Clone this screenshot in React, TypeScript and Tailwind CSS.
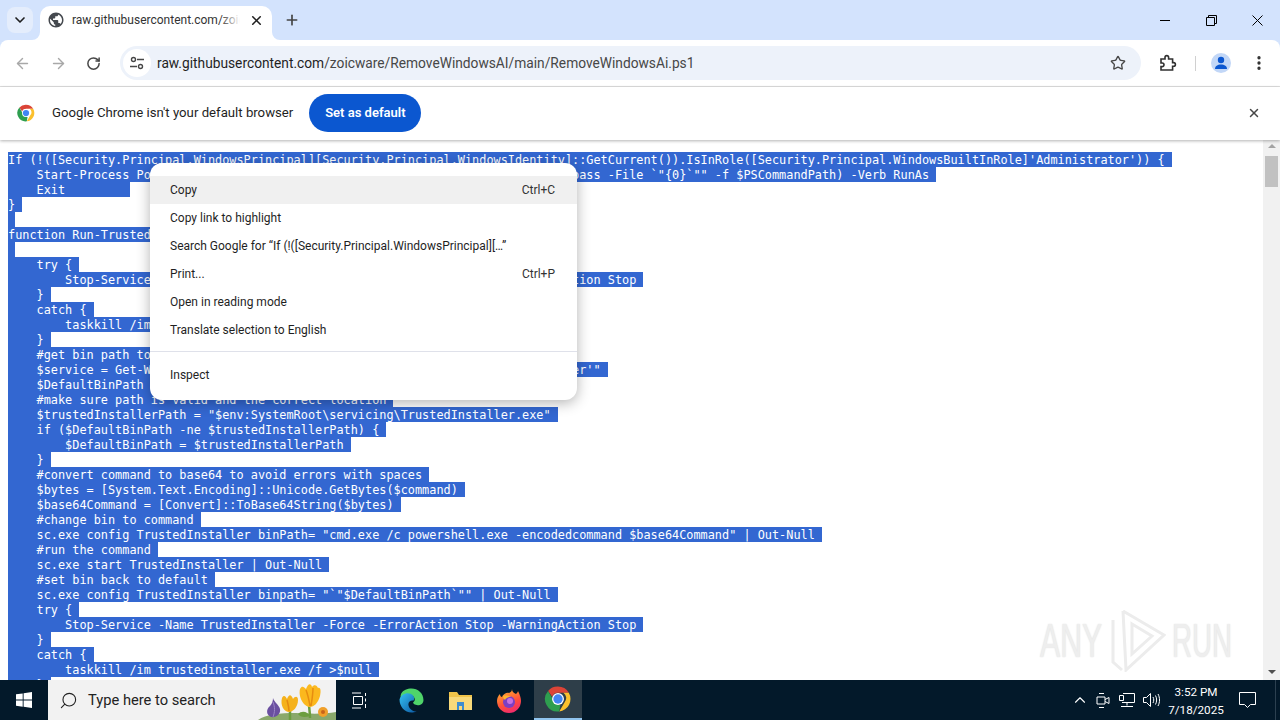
import { ArrowLeft, ArrowRight, ChevronDown, ChevronUp, EllipsisVertical, Plus, RotateCw, Search, Star, X } from 'lucide-react';

type CodeLine = { text: string; cls?: string };

const code: CodeLine[] = [
  { text: "If (!([Security.Principal.WindowsPrincipal][Security.Principal.WindowsIdentity]::GetCurrent()).IsInRole([Security.Principal.WindowsBuiltInRole]'Administrator')) {" },
  { text: '    Start-Process PowerShell.exe -ArgumentList ("-NoProfile -ExecutionPolicy Bypass -File `"{0}`"" -f $PSCommandPath) -Verb RunAs' },
  { text: '    Exit', cls: 'w-[122px]' },
  { text: '}' },
  { text: '' },
  { text: 'function Run-Trusted([String]$command) {' },
  { text: '' },
  { text: '    try {' },
  { text: '        Stop-Service -Name TrustedInstaller -Force -ErrorAction Stop -WarningAction Stop' },
  { text: '    }' },
  { text: '    catch {' },
  { text: '        taskkill /im trustedinstaller.exe /f >$null' },
  { text: '    }' },
  { text: '    #get bin path to revert later' },
  { text: `    $service = Get-WmiObject -Class Win32_Service -Filter "Name='TrustedInstaller'"` },
  { text: '    $DefaultBinPath = $service.PathName' },
  { text: '    #make sure path is valid and the correct location' },
  { text: '    $trustedInstallerPath = "$env:SystemRoot\\servicing\\TrustedInstaller.exe"' },
  { text: '    if ($DefaultBinPath -ne $trustedInstallerPath) {' },
  { text: '        $DefaultBinPath = $trustedInstallerPath' },
  { text: '    }' },
  { text: '    #convert command to base64 to avoid errors with spaces' },
  { text: '    $bytes = [System.Text.Encoding]::Unicode.GetBytes($command)' },
  { text: '    $base64Command = [Convert]::ToBase64String($bytes)' },
  { text: '    #change bin to command' },
  { text: '    sc.exe config TrustedInstaller binPath= "cmd.exe /c powershell.exe -encodedcommand $base64Command" | Out-Null' },
  { text: '    #run the command' },
  { text: '    sc.exe start TrustedInstaller | Out-Null' },
  { text: '    #set bin back to default' },
  { text: '    sc.exe config TrustedInstaller binpath= "`"$DefaultBinPath`"" | Out-Null' },
  { text: '    try {' },
  { text: '        Stop-Service -Name TrustedInstaller -Force -ErrorAction Stop -WarningAction Stop' },
  { text: '    }' },
  { text: '    catch {' },
  { text: '        taskkill /im trustedinstaller.exe /f >$null' },
  { text: '    }' },
];

const menu = [
  { label: 'Copy', keys: 'Ctrl+C', active: true },
  { label: 'Copy link to highlight' },
  { label: 'Search Google for “If (!([Security.Principal.WindowsPrincipal][…”' },
  { label: 'Print...', keys: 'Ctrl+P' },
  { label: 'Open in reading mode' },
  { label: 'Translate selection to English' },
];

function ChromeLogo({ className }: { className: string }) {
  return (
    <svg className={className} viewBox="0 0 48 48">
      <path d="M24 4a20 20 0 0 1 17.3 10H24a10 10 0 0 0-9.3 6.3L8.1 11A20 20 0 0 1 24 4z" fill="#db4437" />
      <path d="M41.3 14A20 20 0 0 1 26 43.9L34.6 29A10 10 0 0 0 32.6 14z" fill="#fbc02d" />
      <path d="M26 43.9A20 20 0 0 1 8.1 11l8.6 15a10 10 0 0 0 11 7.3z" fill="#2e9e4f" />
      <circle cx="24" cy="24" r="9.5" fill="#fff" />
      <circle cx="24" cy="24" r="7.5" fill="#4285f4" />
    </svg>
  );
}

function Flowers() {
  return (
    <svg className="w-[84px] h-10 shrink-0" viewBox="0 0 84 40">
      <path d="M6 40C14 34 28 33 44 33C60 34 74 34 84 32V40Z" fill="#8aa86b" />
      <g transform="translate(6 7)">
        <path d="M13 30C8 28 8 22 12 19C14 17 15 14 15 11C16 15 21 18 22 22C23 27 18 31 13 30Z" fill="#6a4fa0" />
        <path d="M15 15C17 20 17 25 15 30" stroke="#9c86c8" strokeWidth="1" fill="none" />
      </g>
      <path d="M38 40C38 34 38 30 38 30M58 38C58 32 57 28 57 24" stroke="#6c9e3f" strokeWidth="2.5" fill="none" />
      <g transform="translate(5 6)">
        <path d="M25 12C27 8 29 11 30 13C32 8 34 8 36 13C38 10 41 10 41 14C41 21 36 26 32 26C27 26 23 19 25 12Z" fill="#f5b21c" />
        <path d="M30 14C31 18 32 21 32 25" stroke="#e48a12" strokeWidth="1.5" fill="none" />
      </g>
      <g transform="translate(7 3)">
        <path d="M41 6C43 2 45 4 47 6C49 0 52 0 53 4C55 1 58 2 59 5C62 4 62 9 61 13C59 20 55 24 51 24C45 24 39 14 41 6Z" fill="#fbb81e" />
        <path d="M47 7C49 12 50 17 51 23M54 5C54 11 53 17 52 23" stroke="#e78d10" strokeWidth="1.5" fill="none" />
      </g>
      <path d="M46 34C50 30 56 32 58 36C52 38 48 37 46 34Z" fill="#6c9e3f" />
      <circle cx="71" cy="32" r="5" fill="#f0a02a" />
      <circle cx="71" cy="32" r="2" fill="#c8641a" />
    </svg>
  );
}

function Watermark() {
  return (
    <div className="absolute left-[1040px] bottom-[8px] h-[62px] flex items-center font-['Liberation_Sans',sans-serif] text-[#eeeeee] pointer-events-none [text-shadow:0_0_2px_#dddddd]">
      <span className="w-[62px] text-[48px] leading-none origin-left scale-x-[0.63]">ANY</span>
      <svg className="ml-[8px] w-[56px] h-[62px] shrink-0" viewBox="0 0 56 62" fill="none" stroke="#ececec" strokeWidth="3">
        <path d="M13 1L54 25L16 60L13 1M22 14L42 26L22 44ZM3 10V52L12 60" />
      </svg>
      <span className="ml-[6px] w-[60px] text-[48px] leading-none origin-left scale-x-[0.577]">RUN</span>
    </div>
  );
}

export default function App() {
  return (
    <div className="w-[1280px] h-[720px] overflow-hidden flex flex-col bg-[#d3e3fd] font-['Roboto',sans-serif]">
      {/* tab strip */}
      <div className="h-10 flex shrink-0 items-end text-[#1f1f1f]">
        <div className="ml-[7px] mb-[7px] w-[26px] h-[26px] rounded-lg bg-[#e4edfc] flex items-center justify-center">
          <ChevronDown className="w-4 h-4" strokeWidth={2.5} />
        </div>
        <div className="relative ml-[7px] w-[232px] h-[34px] bg-white rounded-t-[10px] flex items-center pl-[8px] pr-2 pb-[6px]">
          <svg className="absolute -left-2 bottom-0 w-2 h-2" viewBox="0 0 8 8"><path d="M8 0V8H0A8 8 0 0 0 8 0Z" fill="#fff" /></svg>
          <svg className="absolute -right-2 bottom-0 w-2 h-2" viewBox="0 0 8 8"><path d="M0 0V8H8A8 8 0 0 1 0 0Z" fill="#fff" /></svg>
          <svg className="w-[18px] h-[18px] shrink-0 ml-[-1px]" viewBox="0 0 24 24" fill="#45494f">
            <path d="M12 2C6.48 2 2 6.48 2 12s4.48 10 10 10 10-4.48 10-10S17.52 2 12 2zm-1 17.93c-3.95-.49-7-3.85-7-7.93 0-.62.08-1.21.21-1.79L9 15v1c0 1.1.9 2 2 2v1.93zm6.9-2.54c-.26-.81-1-1.39-1.9-1.39h-1v-3c0-.55-.45-1-1-1H8v-2h2c.55 0 1-.45 1-1V7h2c1.1 0 2-.9 2-2v-.41c2.93 1.19 5 4.06 5 7.41 0 2.08-.8 3.97-2.1 5.39z" />
          </svg>
          <div className="relative ml-[7px] w-[168px] overflow-hidden whitespace-nowrap text-[12px] text-[#333]">
            raw.githubusercontent.com/zoicware/RemoveWindowsAI
            <div className="absolute right-0 top-0 bottom-0 w-5 bg-gradient-to-r from-transparent to-white" />
          </div>
          <X className="w-[15px] h-[15px] ml-[9px] shrink-0" strokeWidth={2.5} />
        </div>
        <div className="ml-[12px] mb-[12px] w-4 h-4 flex items-center justify-center">
          <Plus className="w-4 h-4 text-[#444]" strokeWidth={2.5} />
        </div>
        <div className="ml-auto h-10 flex items-center text-[#111]">
          <div className="w-[46px] flex justify-center"><div className="w-[10px] h-px bg-black" /></div>
          <div className="w-[46px] flex justify-center">
            <svg className="w-[11px] h-[11px]" viewBox="0 0 11 11" fill="none" stroke="#000"><path d="M.5 2.5h8v8h-8zM2.5 2.5v-2h8v8h-2" /></svg>
          </div>
          <div className="w-[46px] flex justify-center">
            <svg className="w-[11px] h-[11px]" viewBox="0 0 11 11" fill="none" stroke="#000"><path d="M.5.5l10 10M10.5.5l-10 10" /></svg>
          </div>
        </div>
      </div>

      {/* toolbar */}
      <div className="h-[47px] shrink-0 bg-white rounded-t-[8px] border-b border-[#e0e0e0] flex items-center text-[#474747]">
        <ArrowLeft className="ml-[14px] w-[17px] h-[17px] text-[#a8a8a8]" strokeWidth={2} />
        <ArrowRight className="ml-[19px] w-[17px] h-[17px] text-[#a8a8a8]" strokeWidth={2} />
        <RotateCw className="ml-[19px] w-[15px] h-[15px] text-[#474747]" strokeWidth={2.4} />
        <div className="ml-[19px] w-[1021px] h-[34px] rounded-full bg-[#edf2fa] flex items-center pl-[3px]">
          <div className="w-[28px] h-[28px] rounded-full bg-white flex items-center justify-center shrink-0">
            <svg className="w-4 h-4" viewBox="0 0 16 16" fill="none" stroke="#474747" strokeWidth="1.4">
              <circle cx="4.5" cy="4.5" r="2" /><path d="M8 4.5h7M1 11.5h7" /><circle cx="11.5" cy="11.5" r="2" />
            </svg>
          </div>
          <div className="ml-[6px] text-[13.75px] text-[#1f1f1f] whitespace-nowrap">
            raw.githubusercontent.com<span className="text-[#474747]">/zoicware/RemoveWindowsAI/main/RemoveWindowsAi.ps1</span>
          </div>
          <Star className="ml-auto mr-[15px] w-[16px] h-[16px]" strokeWidth={2} />
        </div>
        <svg className="ml-[18px] w-[18px] h-[18px]" viewBox="0 0 18 18" fill="none" stroke="#303030" strokeWidth="1.6">
          <path d="M2 5h4V3.4a1.8 1.8 0 0 1 3.6 0V5h4v3.6h1a1.8 1.8 0 0 1 0 3.6h-1V16H2v-3.4h1.2a1.8 1.8 0 0 0 0-3.6H2z" />
        </svg>
        <div className="ml-[18px] w-px h-[15px] bg-[#d0d0d0]" />
        <div className="ml-[15px] w-5 h-5 rounded-full bg-[#c2d7f7] flex items-center justify-center overflow-hidden">
          <svg className="w-4 h-4" viewBox="0 0 16 16" fill="#0b57d0"><circle cx="8" cy="5" r="3.2" /><path d="M2 14c0-3 2.5-4.5 6-4.5s6 1.5 6 4.5z" /></svg>
        </div>
        <EllipsisVertical className="ml-[19px] w-[18px] h-[18px] text-[#303030]" strokeWidth={2.4} />
      </div>

      {/* default browser bar */}
      <div className="relative z-10 h-[53px] shrink-0 bg-white flex items-center pb-px shadow-[0_1px_3px_rgba(0,0,0,0.3)] text-[#1f1f1f]">
        <ChromeLogo className="ml-[16px] w-5 h-5" />
        <span className="ml-[16px] text-[13.2px]">Google Chrome isn't your default browser</span>
        <div className="ml-[16px] w-[112px] h-[38px] rounded-full bg-[#0b57d0] text-white text-[13px] font-semibold flex items-center justify-center">Set as default</div>
        <X className="ml-auto mr-[19px] w-[14px] h-[14px] text-[#474747]" strokeWidth={2.5} />
      </div>

      {/* page */}
      <div className="relative flex-1 min-h-0 overflow-hidden bg-white flex">
        <div className="flex-1 pl-[8px] pt-[12px] overflow-hidden font-['DejaVu_Sans_Mono',monospace] text-[11.86px] text-white">
          {code.map((line, i) => (
            <div key={i} className="h-[15px] whitespace-pre">
              <span className={`inline-block h-[15px] leading-[17px] align-top bg-[#3367d1] ${line.cls ?? 'pr-[7px]'}`}>{line.text}</span>
            </div>
          ))}
        </div>
        <div className="w-[17px] shrink-0 bg-[#f1f1f1] flex flex-col items-center justify-between pt-[4px] pb-[6px]">
          <div className="flex flex-col items-center">
            <div className="w-0 h-0 border-x-[4px] border-x-transparent border-b-[4px] border-b-[#a3a3a3]" />
            <div className="mt-[8px] w-[13px] h-[31px] bg-[#c1c1c1]" />
          </div>
          <div className="w-0 h-0 border-x-[4px] border-x-transparent border-t-[4px] border-t-[#505050]" />
        </div>
        <Watermark />
        {/* context menu */}
        <div className="absolute left-[150px] top-[23px] w-[427px] h-[237px] rounded-[12px] bg-white shadow-[0_3px_14px_rgba(0,0,0,0.3)] py-[13px] text-[12px] text-[#1f1f1f]">
          {menu.map((item) => (
            <div key={item.label} className={`h-[28px] pl-[20px] pr-[22px] flex items-center justify-between ${item.active ? 'bg-[#f0f0f0]' : ''}`}>
              <span>{item.label}</span>
              {item.keys && <span className="text-[#333]">{item.keys}</span>}
            </div>
          ))}
          <div className="mt-[7px] h-px bg-[#dfe1ea]" />
          <div className="mt-[9px] h-[28px] pl-[20px] flex items-center">Inspect</div>
        </div>
      </div>

      {/* taskbar */}
      <div className="h-10 shrink-0 bg-[#03192a] flex items-stretch text-white">
        <div className="w-12 flex items-center justify-center">
          <svg className="w-4 h-4" viewBox="0 0 16 16" fill="#fff"><path d="M0 2.3l6.7-.9v6.2H0zM7.6 1.3L16 0v7.6H7.6zM0 8.5h6.7v6.2L0 13.7zM7.6 8.5H16V16l-8.4-1.2z" /></svg>
        </div>
        <div className="w-[288px] bg-[#f2f2f2] flex items-center text-[#222]">
          <Search className="ml-[11px] w-[19px] h-[19px] -scale-x-100" strokeWidth={1.4} />
          <span className="ml-[10px] text-[14.7px] whitespace-nowrap">Type here to search</span>
          <div className="ml-auto"><Flowers /></div>
        </div>
        <div className="w-[48px] ml-[-1px] flex items-center justify-center">
          <svg className="w-[16px] h-[17px]" viewBox="0 0 16 17" fill="none" stroke="#fff"><path d="M1 1h9M1 16h9M2.5 4.5h9v8h-9zM14.5 1v3M14.5 6.5v3M14.5 12v4" /></svg>
        </div>
        <div className="w-[50px] ml-[3px] flex items-center justify-center">
          <svg className="w-[25px] h-[25px]" viewBox="0 0 24 24">
            <defs><linearGradient id="ed" x1="0" y1="0" x2="1" y2="1"><stop offset="0" stopColor="#35c1f1" /><stop offset="1" stopColor="#0c59a4" /></linearGradient></defs>
            <path d="M12 0.5C18 0.5 23.5 5 23.5 11.5C23.5 15 21 16.5 18 16.5C15 16.5 13.5 15 13.5 14C14.5 13 15.5 12 15 10C14.3 7.5 11.5 6.5 9 7C5 8 3.5 11 3.5 14C1.5 11.5 1 8 2 5.5C4 2 8 0.5 12 0.5Z" fill="#4fd46a" />
            <path d="M.5 11C2 6 7 4 11 5.5C14 6.7 15.5 9.5 14 12C11.5 11.5 9 13 9 15.5C9 19 12.5 22.5 17 22.5C15 23.3 13.5 23.5 12 23.5C5.5 23.5 .5 18 .5 11Z" fill="url(#ed)" />
          </svg>
        </div>
        <div className="w-[48px] flex items-center justify-center">
          <svg className="w-[23px] h-[21px]" viewBox="0 0 23 21">
            <path d="M0 2h8l2 3h13v15H0z" fill="#f0c44a" />
            <path d="M0 7h23v13H0z" fill="#f8d97a" />
            <path d="M8 12h7v8h-2v-4h-3v4H8z" fill="#3d8dd0" />
          </svg>
        </div>
        <div className="w-[50px] flex items-center justify-center">
          <svg className="w-[24px] h-[25px]" viewBox="0 0 24 25">
            <defs><linearGradient id="ff" x1="0.2" y1="0" x2="0.6" y2="1"><stop offset="0" stopColor="#ffb52e" /><stop offset="0.6" stopColor="#ff4f3a" /><stop offset="1" stopColor="#ef2a6e" /></linearGradient></defs>
            <path d="M15 1C15 4 17 5 19 6C21 4 21 3 21 3C23 7 24 10 24 13A12 12 0 0 1 0 13C0 10 1 8 3 6C3 8 4 9 5 9C6 6 10 4 12 5C14 4 15 3 15 1Z" fill="url(#ff)" />
            <circle cx="12" cy="14" r="6" fill="#7b3fc4" />
            <circle cx="13" cy="13" r="3" fill="#c770e0" />
            <path d="M6 8C9 7 13 8 14 9C11 9 9 10 8 12C7 11 6 10 6 8Z" fill="#ffb52e" />
          </svg>
        </div>
        <div className="w-[48px] bg-[#2e3e49] border-b-2 border-[#90c4ee] flex items-center justify-center">
          <ChromeLogo className="w-[30px] h-[30px]" />
        </div>

        {/* tray */}
        <div className="ml-auto flex items-center text-white">
          <ChevronUp className="w-[18px] h-[18px]" strokeWidth={1.5} />
          <svg className="ml-[6px] w-[16px] h-[17px]" viewBox="0 0 16 17" fill="none" stroke="#fff"><path d="M4 1.5h5M4 15.5h5M2 5v7h8V5zM10 7.5l4-2v6l-4-2" /></svg>
          <svg className="ml-[8px] w-[16px] h-[15px]" viewBox="0 0 16 15" fill="none" stroke="#fff"><path d="M4 .5h11.5v9H3M.5 2.5h4v5h-4zM8 9.5v3M2 13.5h12" /></svg>
          <svg className="ml-[8px] w-[17px] h-[14px]" viewBox="0 0 17 14" fill="none" stroke="#fff"><path d="M.5 4.5h3l4-4v13l-4-4h-3zM10 4c1 2 1 4 0 6M12.5 2.5c1.5 3 1.5 6 0 9M15 1c2 3.5 2 8.500 0 12" /></svg>
          <div className="w-[72px] pt-px text-center text-[11.7px] leading-[18px] whitespace-nowrap">
            <div>3:52 PM</div>
            <div>7/18/2025</div>
          </div>
          <svg className="ml-[7px] w-[17px] h-[16px]" viewBox="0 0 17 16" fill="none" stroke="#fff"><path d="M.5.5h16v12h-5l-3 3-3-3h-5z" /></svg>
          <div className="ml-[19px] w-px h-full bg-[#2c4050]" />
          <div className="w-[4px]" />
        </div>
      </div>
    </div>
  );
}
